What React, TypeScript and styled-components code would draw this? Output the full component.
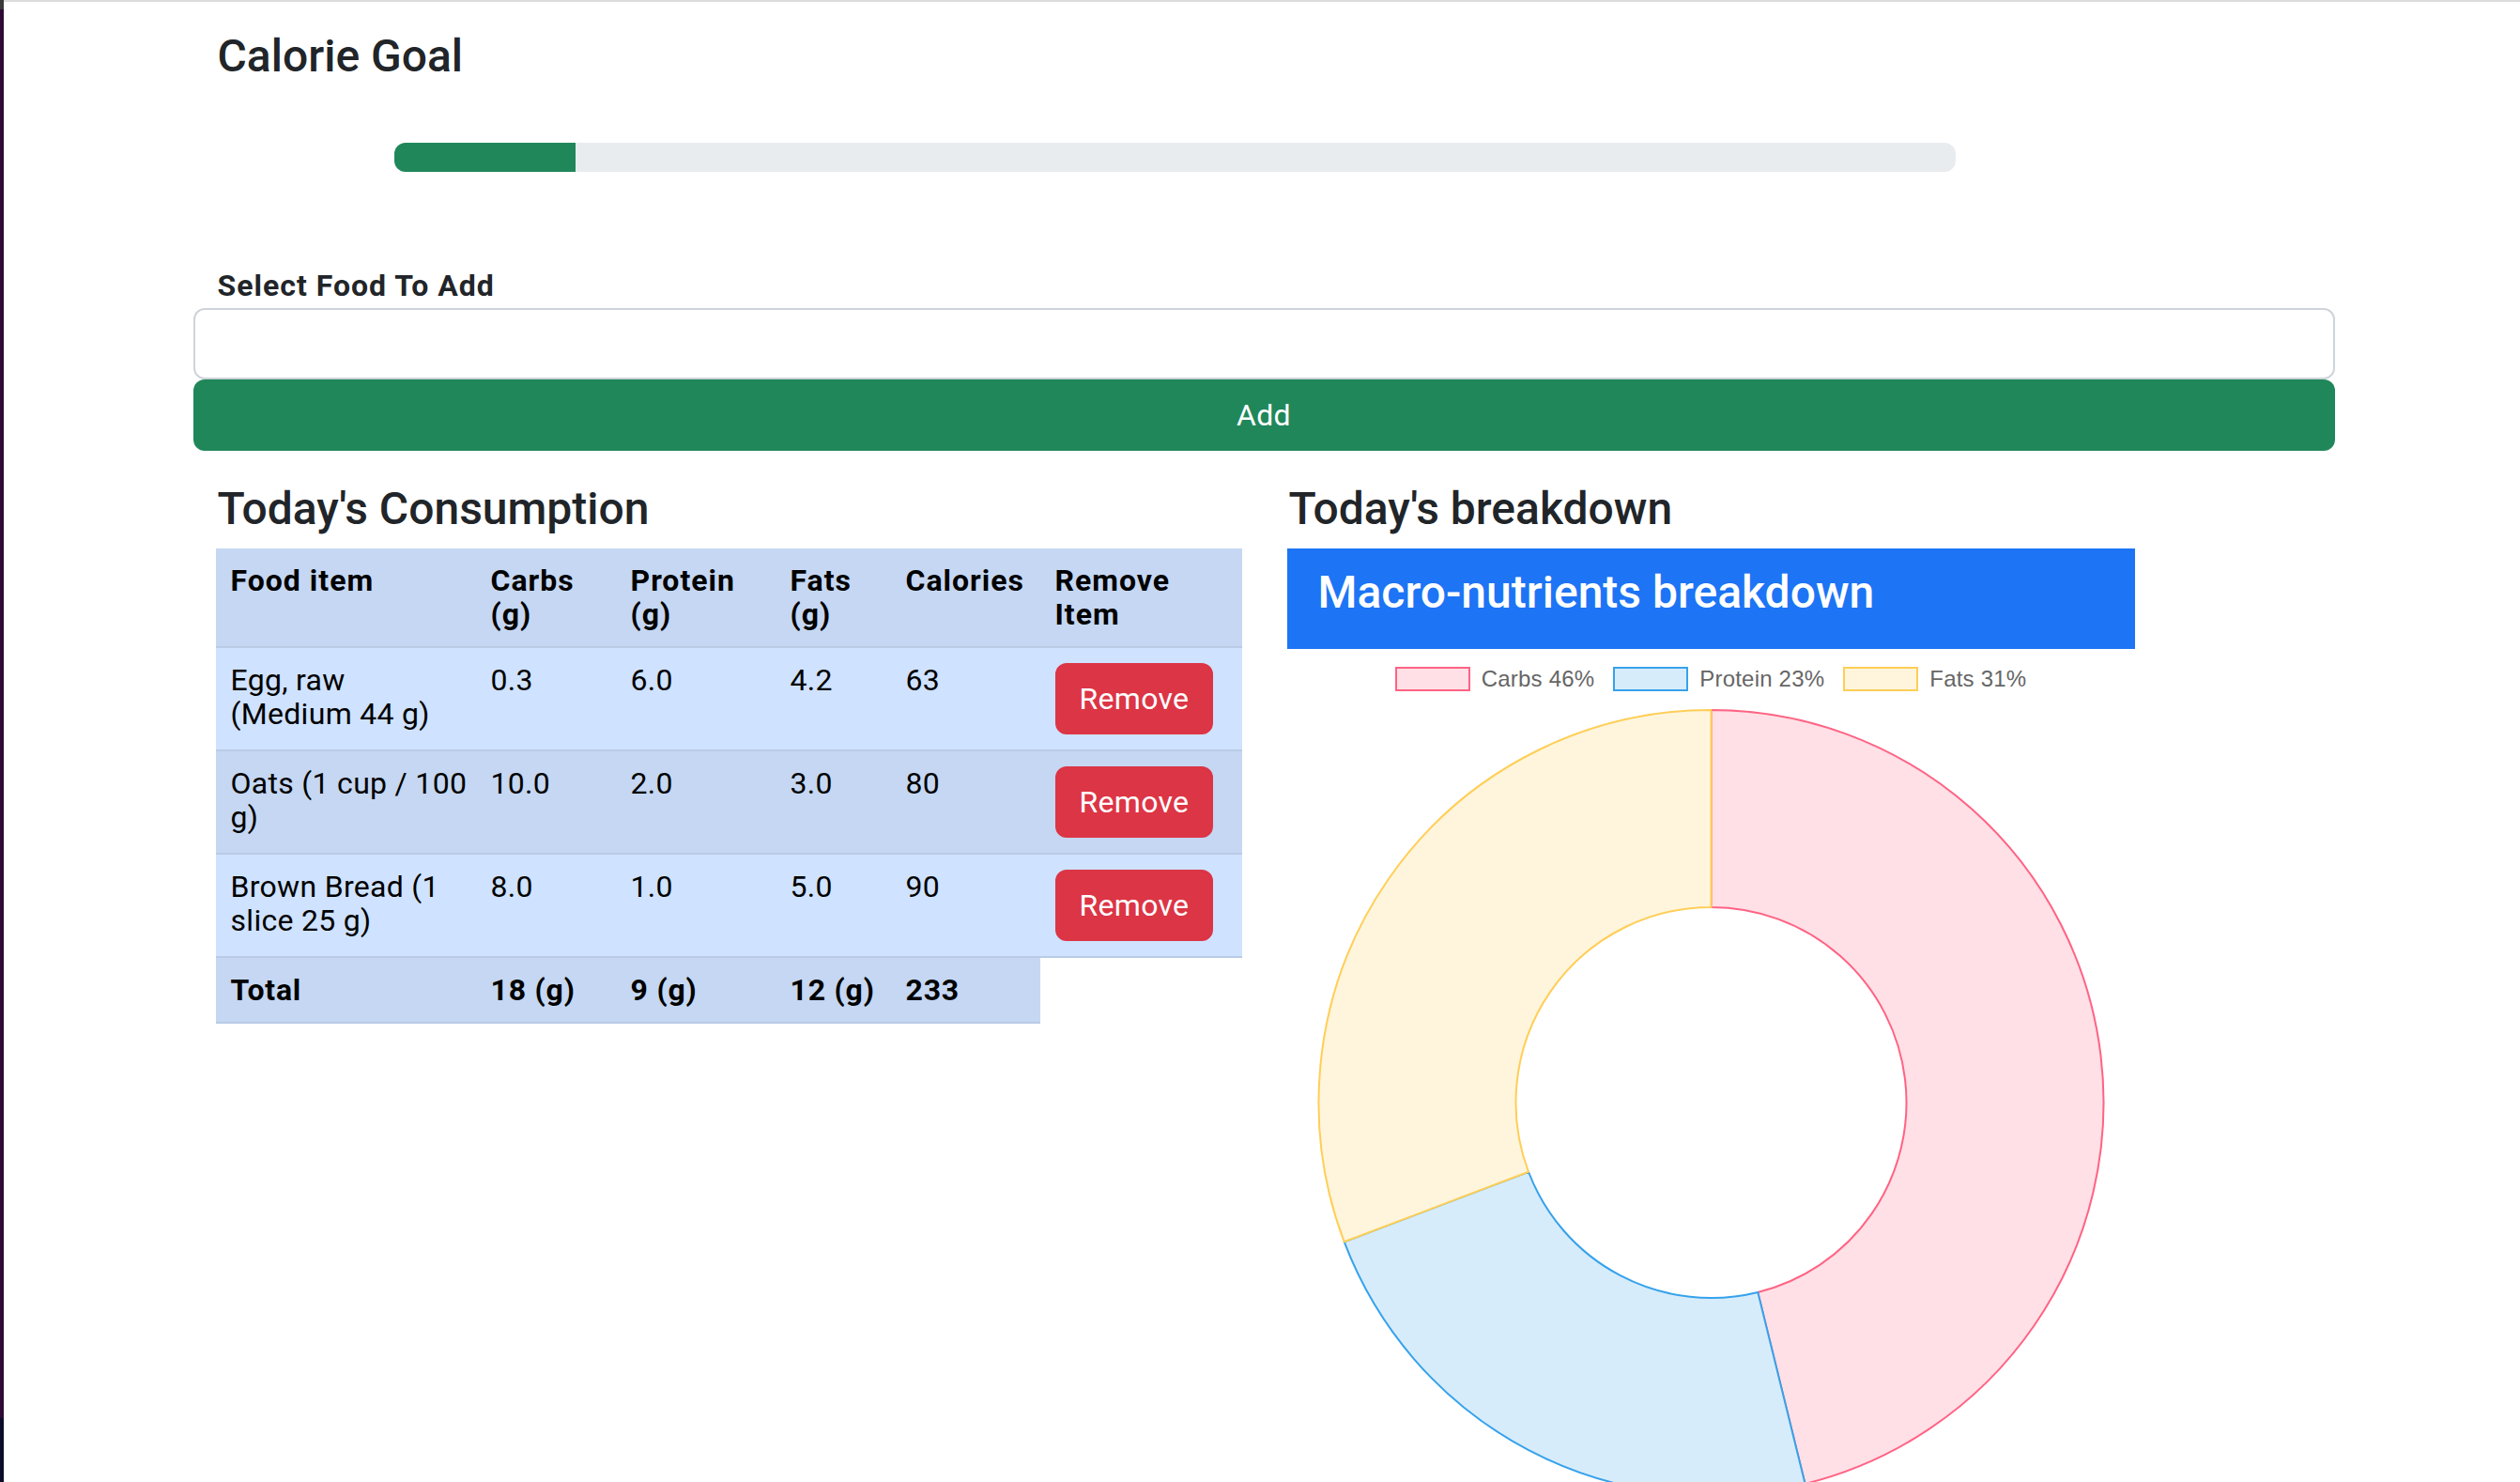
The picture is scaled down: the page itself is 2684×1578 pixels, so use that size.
import React from 'react';
import styled, { createGlobalStyle } from 'styled-components';

const GlobalStyle = createGlobalStyle`
  html, body {
    margin: 0;
    padding: 0;
    background: #ffffff;
    overflow: hidden;
  }
  body {
    font-family: Roboto, "Liberation Sans", Arial, sans-serif;
    color: #212529;
  }
  * {
    box-sizing: border-box;
  }
`;

const Shell = styled.div`
  display: flex;
  min-height: 1578px;
`;

const SideStrip = styled.div`
  width: 4px;
  flex: 0 0 4px;
  background: linear-gradient(#3a3a3a 0 10px, #2e0b33 10px 1510px, #0b0b2a 1510px);
`;

const Main = styled.div`
  flex: 1;
  padding-left: 4px;
  border-top: 2px solid #dcdcdc;
`;

const Container = styled.div`
  width: 2281px;
  margin: 0 auto;
`;

const Title = styled.h3`
  margin: 29px 0 0 26px;
  font-size: 48px;
  font-weight: 500;
  line-height: 1.2;
  color: #212529;
`;

const Progress = styled.div`
  margin: 63px 0 0 214px;
  width: 1663px;
  height: 31px;
  background: #e9ecef;
  border-radius: 12px;
  overflow: hidden;
  display: flex;
`;

const ProgressFill = styled.div`
  height: 100%;
  background: #20875a;
`;

const Label = styled.label`
  display: block;
  margin: 97px 0 0 26px;
  font-size: 32px;
  font-weight: 700;
  letter-spacing: 1px;
  line-height: 48px;
  color: #212529;
`;

const FoodInput = styled.input`
  display: block;
  width: 100%;
  height: 76px;
  margin: 0;
  padding: 12px 24px;
  font-family: inherit;
  font-size: 32px;
  border: 2px solid #ced4da;
  border-radius: 12px;
  background: #fff;
  outline: none;
`;

const AddButton = styled.button`
  display: block;
  width: 100%;
  height: 76px;
  margin: 0;
  border: none;
  border-radius: 12px;
  background: #20875a;
  color: #fff;
  font-family: inherit;
  font-size: 32px;
  letter-spacing: 0.3px;
  line-height: 48px;
  cursor: pointer;
`;

const Columns = styled.div`
  display: grid;
  grid-template-columns: 1fr 1fr;
  margin-top: 33px;
`;

const Column = styled.div`
  padding: 0 24px;
`;

const SectionTitle = styled.h3`
  margin: 0 0 14px 2px;
  font-size: 48px;
  font-weight: 500;
  line-height: 1.2;
  color: #212529;
`;

const Table = styled.table`
  width: 1093px;
  table-layout: fixed;
  border-collapse: collapse;
  color: #000;
  font-size: 32px;
  line-height: 36px;
  letter-spacing: 0.3px;
`;

const ColWidth = styled.col<{ $w: number }>`
  width: ${(p) => p.$w}px;
`;

const HeadCell = styled.th`
  text-align: left;
  vertical-align: top;
  font-weight: 700;
  letter-spacing: 1px;
  padding: 16px;
  background: #c5d7f2;
  border-bottom: 2px solid #bacbe6;
  &:first-child {
    padding-right: 4px;
  }
`;

const Cell = styled.td<{ $dark?: boolean; $bold?: boolean }>`
  vertical-align: top;
  padding: 16px;
  background: ${(p) => (p.$dark ? '#c5d7f2' : '#cfe2ff')};
  border-bottom: 2px solid #bacbe6;
  font-weight: ${(p) => (p.$bold ? 700 : 400)};
  letter-spacing: ${(p) => (p.$bold ? '0.8px' : '0.3px')};
  white-space: ${(p) => (p.$bold ? 'nowrap' : 'normal')};
  &:first-child {
    padding-right: 4px;
  }
`;

const RemoveButton = styled.button`
  display: block;
  border: 2px solid #dc3545;
  border-radius: 12px;
  background: #dc3545;
  color: #fff;
  font-family: inherit;
  font-size: 32px;
  letter-spacing: 0.3px;
  line-height: 48px;
  padding: 12px 24px;
  cursor: pointer;
`;

const ChartCard = styled.div`
  width: 903px;
`;

const Banner = styled.h2`
  margin: 0;
  padding: 18px 33px 31px;
  background: #1d74f5;
  color: #fff;
  font-size: 48px;
  font-weight: 500;
  line-height: 1.2;
`;

const Legend = styled.div`
  display: flex;
  justify-content: center;
  align-items: center;
  gap: 20px;
  height: 64px;
`;

const LegendItem = styled.div`
  display: flex;
  align-items: center;
  gap: 12px;
  font-family: "Liberation Sans", Arial, sans-serif;
  font-size: 24px;
  letter-spacing: 0.2px;
  line-height: 24px;
  color: #666;
`;

const Swatch = styled.span<{ $fill: string; $stroke: string }>`
  width: 80px;
  height: 26px;
  background: ${(p) => p.$fill};
  border: 2px solid ${(p) => p.$stroke};
`;

const Donut = styled.svg`
  display: block;
`;

const foods = [
  { name: 'Egg, raw (Medium 44 g)', carbs: '0.3', protein: '6.0', fats: '4.2', cal: '63' },
  { name: 'Oats (1 cup / 100 g)', carbs: '10.0', protein: '2.0', fats: '3.0', cal: '80' },
  { name: 'Brown Bread (1 slice 25 g)', carbs: '8.0', protein: '1.0', fats: '5.0', cal: '90' },
];

const macros = [
  { label: 'Carbs', value: 18, fill: '#ffe0e6', stroke: 'rgb(255, 99, 132)' },
  { label: 'Protein', value: 9, fill: '#d7ecfb', stroke: 'rgb(54, 162, 235)' },
  { label: 'Fats', value: 12, fill: '#fff5dd', stroke: 'rgb(255, 206, 86)' },
];

function arcPath(cx: number, cy: number, r0: number, r1: number, a0: number, a1: number) {
  const pt = (r: number, a: number) => [cx + r * Math.sin(a), cy - r * Math.cos(a)];
  const large = a1 - a0 > Math.PI ? 1 : 0;
  const [x1, y1] = pt(r1, a0);
  const [x2, y2] = pt(r1, a1);
  const [x3, y3] = pt(r0, a1);
  const [x4, y4] = pt(r0, a0);
  return `M${x1} ${y1} A${r1} ${r1} 0 ${large} 1 ${x2} ${y2} L${x3} ${y3} A${r0} ${r0} 0 ${large} 0 ${x4} ${y4} Z`;
}

const App: React.FC = () => {
  const total = macros.reduce((s, m) => s + m.value, 0);
  let angle = 0;
  const arcs = macros.map((m) => {
    const start = angle;
    angle += (m.value / total) * Math.PI * 2;
    return { ...m, d: arcPath(451.5, 419, 208, 418, start, angle) };
  });

  return (
    <>
      <GlobalStyle />
      <Shell>
        <SideStrip />
        <Main>
          <Container>
            <Title>Calorie Goal</Title>
            <Progress>
              <ProgressFill style={{ width: `${(233 / 2000) * 100}%` }} />
            </Progress>
            <Label>Select Food To Add</Label>
            <FoodInput type="text" />
            <AddButton>Add</AddButton>
            <Columns>
              <Column>
                <SectionTitle>Today's Consumption</SectionTitle>
                <Table>
                  <colgroup>
                    <ColWidth $w={277} />
                    <ColWidth $w={149} />
                    <ColWidth $w={170} />
                    <ColWidth $w={123} />
                    <ColWidth $w={159} />
                    <ColWidth $w={215} />
                  </colgroup>
                  <thead>
                    <tr>
                      <HeadCell>Food item</HeadCell>
                      <HeadCell>Carbs (g)</HeadCell>
                      <HeadCell>Protein (g)</HeadCell>
                      <HeadCell>Fats (g)</HeadCell>
                      <HeadCell>Calories</HeadCell>
                      <HeadCell>Remove Item</HeadCell>
                    </tr>
                  </thead>
                  <tbody>
                    {foods.map((f, i) => (
                      <tr key={f.name}>
                        <Cell $dark={i % 2 === 1}>{f.name}</Cell>
                        <Cell $dark={i % 2 === 1}>{f.carbs}</Cell>
                        <Cell $dark={i % 2 === 1}>{f.protein}</Cell>
                        <Cell $dark={i % 2 === 1}>{f.fats}</Cell>
                        <Cell $dark={i % 2 === 1}>{f.cal}</Cell>
                        <Cell $dark={i % 2 === 1}>
                          <RemoveButton>Remove</RemoveButton>
                        </Cell>
                      </tr>
                    ))}
                    <tr>
                      <Cell $dark $bold>Total</Cell>
                      <Cell $dark $bold>18 (g)</Cell>
                      <Cell $dark $bold>9 (g)</Cell>
                      <Cell $dark $bold>12 (g)</Cell>
                      <Cell $dark $bold>233</Cell>
                    </tr>
                  </tbody>
                </Table>
              </Column>
              <Column>
                <SectionTitle>Today's breakdown</SectionTitle>
                <ChartCard>
                  <Banner>Macro-nutrients breakdown</Banner>
                  <Legend>
                    {macros.map((m) => (
                      <LegendItem key={m.label}>
                        <Swatch $fill={m.fill} $stroke={m.stroke} />
                        {m.label} {Math.round((m.value / total) * 100)}%
                      </LegendItem>
                    ))}
                  </Legend>
                  <Donut width={903} height={838} viewBox="0 0 903 838">
                    {arcs.map((a) => (
                      <path key={a.label} d={a.d} fill={a.fill} stroke={a.stroke} strokeWidth={2} strokeLinejoin="round" />
                    ))}
                  </Donut>
                </ChartCard>
              </Column>
            </Columns>
          </Container>
        </Main>
      </Shell>
    </>
  );
};

export default App;
